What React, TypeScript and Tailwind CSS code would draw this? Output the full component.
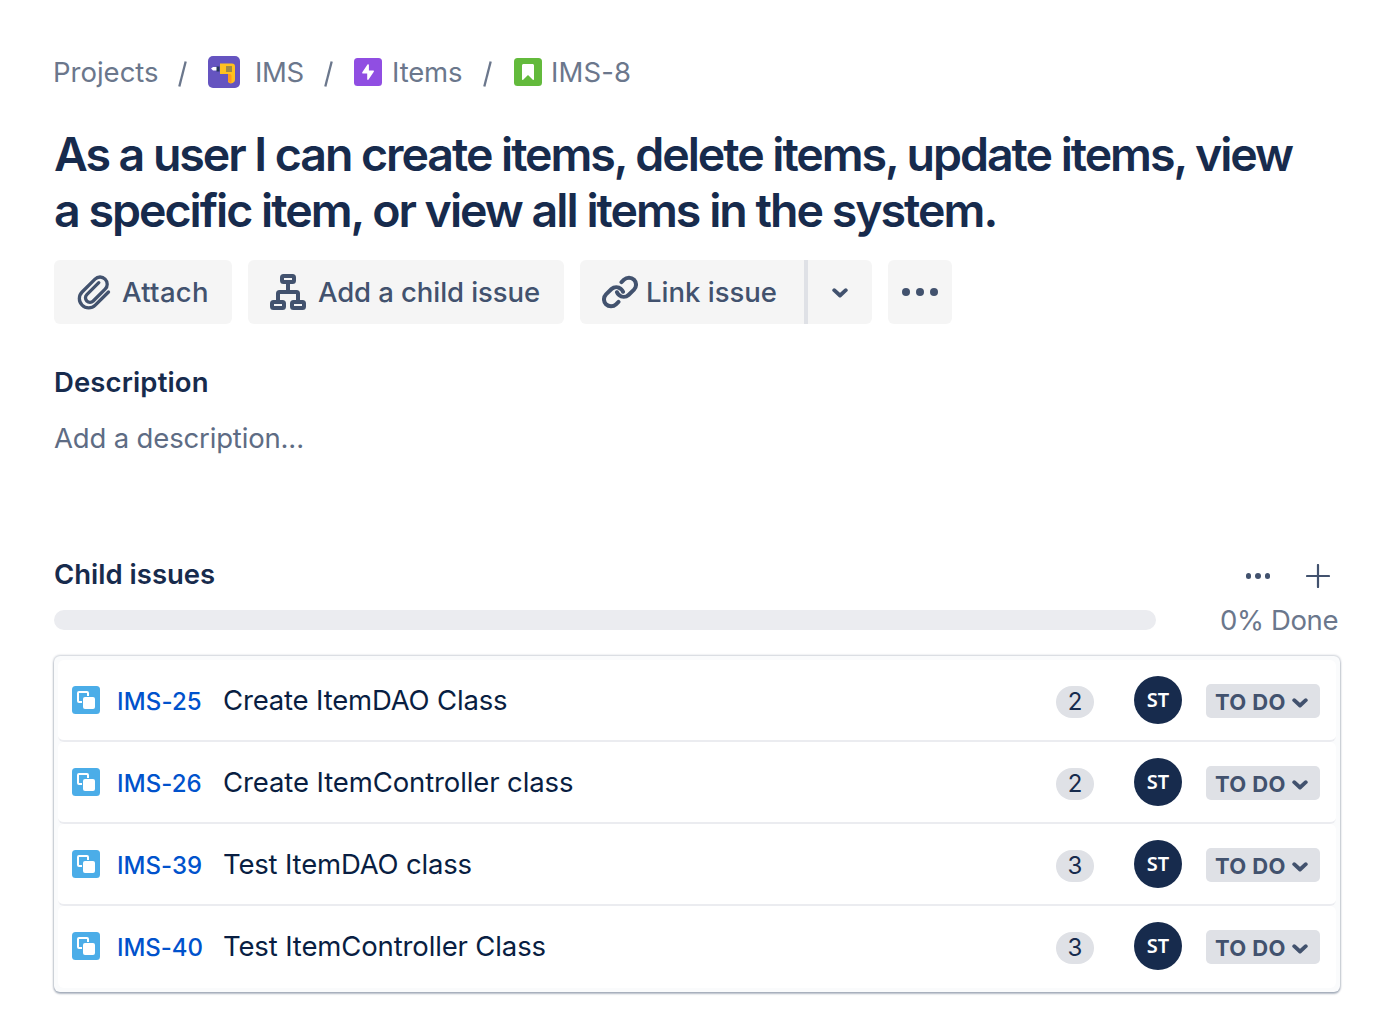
import React from "react";

const issues = [
  { key: "IMS-25", title: "Create ItemDAO Class", points: 2, keyClass: "tracking-[0.15px]", titleClass: "tracking-[-0.17px]" },
  { key: "IMS-26", title: "Create ItemController class", points: 2, keyClass: "tracking-[0.1px]", titleClass: "tracking-[-0.11px]" },
  { key: "IMS-39", title: "Test ItemDAO class", points: 3, keyClass: "tracking-[0.05px]", titleClass: "tracking-[-0.18px]" },
  { key: "IMS-40", title: "Test ItemController Class", points: 3, keyClass: "tracking-[-0.06px]", titleClass: "tracking-[-0.14px]" },
];

function DrillIcon() {
  return (
    <svg width="32" height="32" viewBox="0 0 32 32" className="mr-[15px] shrink-0">
      <rect width="32" height="32" rx="5" fill="#6554c0" />
      <path d="M3 12.5 5 11h4v3.500H5z" fill="#ffffff" />
      <path d="M8.500 10.500h3v5h-3z" fill="#253858" />
      <path d="M12 7.500h12a3 3 0 0 1 3 3V23a4 4 0 0 1-7 3v-8h-8z" fill="#ffc11f" />
      <path d="M20 18h1.500c1.500 0 2 1 2 2.500V27c-2 0-3.500-1-3.500-2.500z" fill="#ff991f" />
      <path d="M18 11h6M18 13h6M18 15h6" stroke="#42526e" strokeWidth="1" />
    </svg>
  );
}

function EpicIcon() {
  return (
    <svg width="28" height="28" viewBox="0 0 28 28" className="mr-2.5 shrink-0">
      <rect width="28" height="28" rx="3.500" fill="#904ee2" />
      <path d="M13.500 6.600 8.300 14.200c-.4.600 0 1.300.6 1.300h4.300v5.600c0 1 .9 1.200 1.400.5l5.200-7.800c.4-.6 0-1.300-.6-1.300h-4.300V7.100c0-1-.9-1.200-1.400-.5z" fill="#fff" />
    </svg>
  );
}

function StoryIcon() {
  return (
    <svg width="28" height="28" viewBox="0 0 28 28" className="mr-2.5 shrink-0">
      <rect width="28" height="28" rx="3.500" fill="#63ba3c" />
      <path d="M8 7.500C8 6.700 8.700 6 9.500 6h9c.8 0 1.500.7 1.500 1.500v13.800c0 .7-.7 1-1.200.5L14 17l-4.800 4.800c-.5.500-1.200.2-1.200-.5z" fill="#fff" />
    </svg>
  );
}

function SubtaskIcon() {
  return (
    <svg width="28" height="28" viewBox="0 0 28 28" className="shrink-0">
      <rect width="28" height="28" rx="3.500" fill="#4bade8" />
      <rect x="6" y="6" width="10" height="10" rx="1" fill="none" stroke="#fff" strokeWidth="2" />
      <rect x="10" y="10" width="14" height="14" rx="3" fill="#4bade8" />
      <rect x="11" y="11" width="12" height="12" rx="2" fill="#fff" />
    </svg>
  );
}

function PaperclipIcon() {
  return (
    <svg width="36" height="38" viewBox="0 0 36 38" fill="none" stroke="#42526e" strokeWidth="3.300" strokeLinecap="round" className="mr-2.5 shrink-0">
      <path d="M32.500 19.500 19.300 32.700a9.300 9.300 0 0 1-13.200 0 9.300 9.300 0 0 1 0-13.200L19 6.600a7.100 7.100 0 0 1 10.100 0 7.100 7.100 0 0 1 0 10.100L17.200 28.500a4.500 4.500 0 0 1-6.400 0 4.500 4.500 0 0 1 0-6.400L22.800 10.200" transform="translate(0 -.5)" />
    </svg>
  );
}

function TreeIcon() {
  return (
    <svg width="36" height="36" viewBox="0 0 36 36" fill="none" stroke="#42526e" strokeWidth="4" className="mr-3 shrink-0">
      <rect x="12" y="2" width="12" height="6" rx="1.500" />
      <rect x="2" y="28" width="12" height="6" rx="1.500" />
      <rect x="22" y="28" width="12" height="6" rx="1.500" />
      <path d="M18 9v9M8 27v-7.500C8 18.500 8.500 18 9.500 18h17c1 0 1.500.5 1.500 1.500V27" />
    </svg>
  );
}

function LinkIcon() {
  return (
    <svg width="36" height="34" viewBox="0 0 36 34" fill="none" stroke="#42526e" strokeWidth="4" strokeLinecap="round" className="mr-2.5 shrink-0">
      <path d="M19.500 7.200 22 4.700a7.200 7.200 0 0 1 10 0 7.200 7.200 0 0 1 0 10L26.500 20a7 7 0 0 1-9.500 0 6.500 6.500 0 0 1-2-2.800" />
      <path d="M16.500 26.800 14 29.300a7.200 7.200 0 0 1-10 0 7.200 7.200 0 0 1 0-10L9.500 14a7 7 0 0 1 9.500 0 6.500 6.500 0 0 1 2 2.800" />
    </svg>
  );
}

function Chevron({ className }: { className?: string }) {
  return (
    <svg width="16" height="10" viewBox="0 0 16 10" fill="none" stroke="#42526e" strokeWidth="3.800" strokeLinecap="round" strokeLinejoin="round" className={className}>
      <path d="M2.200 2.200 8 7.500l5.800-5.300" />
    </svg>
  );
}

function Separator({ className }: { className: string }) {
  return (
    <svg width="9" height="26" viewBox="0 0 9 26" className={className}>
      <path d="M7.700.5 1.300 25.500" stroke="#6b778c" strokeWidth="2.300" />
    </svg>
  );
}

export default function App() {
  return (
    <main className="h-[1034px] w-[1392px] bg-white pl-[54px] pt-[52px] font-['Inter',sans-serif] text-[27.5px] leading-10 text-[#172b4d]">
      <nav className="flex h-10 items-center whitespace-nowrap text-[#6b778c]">
        <span className="w-[125px] -ml-px">Projects</span>
        <Separator className="mr-[21px] mt-1 shrink-0" />
        <DrillIcon />
        <span className="w-[69px] tracking-[-0.4px]">IMS</span>
        <Separator className="mr-[21px] mt-1 shrink-0" />
        <EpicIcon />
        <span className="w-[91px] tracking-[-0.16px]">Items</span>
        <Separator className="mr-[22px] mt-1 shrink-0" />
        <StoryIcon />
        <span className="-ml-px tracking-[0.12px]">IMS-8</span>
      </nav>

      <h1 className="mt-[34px] whitespace-nowrap text-[46.5px] font-semibold leading-[56px] tracking-[-2.05px]">
        <span className="block">As a user I can create items, delete items, update items, view</span>
        <span className="block tracking-[-2px]">a specific item, or view all items in the system.</span>
      </h1>

      <div className="mt-[22px] flex h-16 gap-4 font-medium text-[#42526e]">
        <button className="flex w-[178px] items-center rounded-md bg-[#f5f5f5] pl-[22px]">
          <PaperclipIcon />
          <span className="tracking-[0.3px]">Attach</span>
        </button>
        <button className="flex w-[316px] items-center whitespace-nowrap rounded-md bg-[#f5f5f5] pl-[22px]">
          <TreeIcon />
          <span className="tracking-[-0.08px]">Add a child issue</span>
        </button>
        <div className="flex w-[292px]">
          <button className="flex w-[224px] items-center whitespace-nowrap rounded-l-md bg-[#f5f5f5] pl-[22px]">
            <LinkIcon />
            <span className="-ml-0.5">Link issue</span>
          </button>
          <span className="w-1 bg-[#dfe1e6]" />
          <button className="flex w-16 items-center justify-center rounded-r-md bg-[#f5f5f5]">
            <Chevron className="mt-0.5" />
          </button>
        </div>
        <button className="flex w-16 items-center justify-center gap-1.5 rounded-md bg-[#f5f5f5]">
          <span className="size-2 rounded-full bg-[#42526e]" />
          <span className="size-2 rounded-full bg-[#42526e]" />
          <span className="size-2 rounded-full bg-[#42526e]" />
        </button>
      </div>

      <h2 className="mt-[38px] font-semibold tracking-[0.12px]">Description</h2>
      <p className="mt-4 tracking-[-0.16px] text-[#5e6c84]">Add a description...</p>

      <div className="mt-24 flex h-10 w-[1286px] items-center">
        <h2 className="font-semibold">Child issues</h2>
        <div className="ml-auto mr-9 mt-1 flex gap-1">
          <span className="size-[5.500px] rounded-full bg-[#42526e]" />
          <span className="size-[5.500px] rounded-full bg-[#42526e]" />
          <span className="size-[5.500px] rounded-full bg-[#42526e]" />
        </div>
        <svg width="24" height="24" viewBox="0 0 24 24" className="mr-2.5 mt-1" stroke="#42526e" strokeWidth="2.200" strokeLinecap="round">
          <path d="M12 1v22M1 12h22" />
        </svg>
      </div>

      <div className="mt-1.5 flex h-10 w-[1286px] items-center">
        <div className="h-5 w-[1102px] rounded-full bg-[#ebecf0]" />
        <span className="ml-16 whitespace-nowrap tracking-[-0.36px] text-[#6b778c]">0% Done</span>
      </div>

      <section className="mt-4 h-[336px] w-[1286px] rounded-md bg-[#fafbfc] p-1 shadow-[0_2px_2px_rgba(9,30,66,0.25),0_0_2px_1px_rgba(9,30,66,0.2)]">
        {issues.map((issue) => (
          <article key={issue.key} className="flex h-[82px] items-center whitespace-nowrap rounded-md border-b-2 border-[#ebecf0] bg-white pl-3.5 pr-4 last:border-white">
            <SubtaskIcon />
            <span className={`ml-[17px] mt-[3px] w-[106px] text-[24px] font-medium text-[#0052cc] ${issue.keyClass}`}>{issue.key}</span>
            <span className={`text-[#091e42] ${issue.titleClass}`}>{issue.title}</span>
            <span className="ml-auto mr-10 mt-1 flex h-8 w-[38px] items-center justify-center rounded-full bg-[#dfe1e6] text-[24px]">{issue.points}</span>
            <span className="mr-6 flex size-12 items-center justify-center rounded-full bg-[#172b4d] font-['Noto_Sans',sans-serif] text-[20px] font-semibold text-white">ST</span>
            <button className="mt-0.5 flex h-[34px] w-[114px] items-center rounded-[5px] bg-[#dfe1e6] pl-[9px] text-[22px] font-bold text-[#42526e]">
              <span className="mt-0.5 w-[77px] text-left tracking-[0.36px]">TO DO</span>
              <Chevron className="mt-1" />
            </button>
          </article>
        ))}
      </section>
    </main>
  );
}
